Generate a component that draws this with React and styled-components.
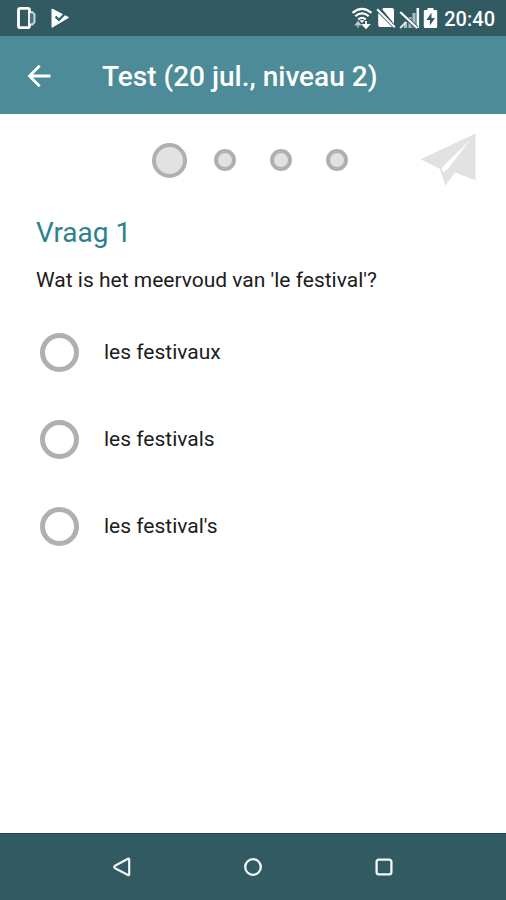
import React, { useState } from "react";
import styled, { createGlobalStyle } from "styled-components";

const GlobalStyle = createGlobalStyle`
  *, *::before, *::after { box-sizing: border-box; }
  body {
    margin: 0;
    background: #fff;
    color: #1c1c1c;
    font-family: Roboto, "Liberation Sans", sans-serif;
  }
  button { font: inherit; color: inherit; }
`;

const Screen = styled.div`
  display: flex;
  flex-direction: column;
  min-height: 100vh;
`;

const StatusBar = styled.div`
  display: flex;
  justify-content: space-between;
  align-items: center;
  height: 36px;
  padding: 0 11px 0 16px;
  background: #315a62;
  color: #fff;
`;

const StatusGroup = styled.div`
  display: flex;
  align-items: center;
  gap: ${(p) => p.$gap}px;
`;

const Clock = styled.time`
  padding: 2px 0 0 3px;
  font-size: 20px;
  line-height: 24px;
  font-weight: 500;
`;

const AppBar = styled.header`
  display: flex;
  align-items: center;
  gap: 46px;
  height: 78px;
  padding: 3px 22px 0;
  background: #4c8b97;
  color: #fff;
`;

const IconButton = styled.button`
  display: flex;
  align-items: center;
  justify-content: center;
  padding: 0;
  border: 0;
  background: none;
  cursor: pointer;
`;

const Title = styled.h1`
  margin: 0;
  font-size: 28px;
  line-height: 36px;
  font-weight: 500;
`;

const Main = styled.main`
  flex: 1;
  display: flex;
  flex-direction: column;
  padding: 16px 30px;
`;

const Progress = styled.nav`
  display: grid;
  grid-template-columns: 1fr auto 1fr;
  align-items: center;
  height: 60px;
`;

const Steps = styled.div`
  display: grid;
  grid-template-columns: repeat(4, 56px);
  grid-column: 2;
  place-items: center;
`;

const Step = styled.button`
  width: ${(p) => (p.$current ? 35 : 22)}px;
  height: ${(p) => (p.$current ? 35 : 22)}px;
  padding: 0;
  border: 4px solid #b0b0b0;
  border-radius: 50%;
  background: #e2e2e2;
  cursor: pointer;
`;

const SendSlot = styled.div`
  justify-self: end;
`;

const Question = styled.section`
  padding: 25px 6px 0;
`;

const QuestionTitle = styled.h2`
  margin: 0;
  color: #2d818e;
  font-size: 28px;
  line-height: 36px;
  font-weight: 400;
`;

const Prompt = styled.p`
  margin: 15px 0 0;
  font-size: 21px;
  line-height: 28px;
`;

const Answers = styled.div`
  display: flex;
  flex-direction: column;
  gap: 47px;
  padding: 38px 4px 0;
`;

const Answer = styled.label`
  display: flex;
  align-items: center;
  gap: 25px;
  min-height: 40px;
  font-size: 21px;
  line-height: 28px;
  cursor: pointer;
`;

const Radio = styled.input`
  appearance: none;
  flex: none;
  width: 39px;
  height: 39px;
  margin: 0;
  border: 5px solid #b0b0b0;
  border-radius: 50%;
  background: #fff;

  &:checked {
    border-color: #4c8b97;
    box-shadow: inset 0 0 0 5px #fff;
    background: #4c8b97;
  }
`;

const SystemNav = styled.nav`
  display: flex;
  justify-content: center;
  align-items: center;
  gap: 107px;
  height: 67px;
  border-top: 1px solid #17484f;
  background: #315a62;
  color: #f2f7f8;
`;

const DeviceIcon = () => (
  <svg width="20" height="24" viewBox="0 0 20 24" fill="none">
    <path d="M12.5 6.2h4l2 2.2v7.8l-2 2.2h-4" fill="#4d737a" stroke="#c8d7d9" strokeWidth="2" />
    <path d="M13.5 7V4q0-1.7-1.7-1.7H4.2Q2.5 2.3 2.5 4v16q0 1.7 1.7 1.7h7.6q1.7 0 1.7-1.7v-2.5" stroke="#fff" strokeWidth="2.8" />
    <path d="M13 6.5v12" stroke="#fff" strokeWidth="1.8" />
  </svg>
);

const PlayCheckIcon = () => (
  <svg width="20" height="20" viewBox="0 0 20 20" fill="none">
    <path d="M2 1 18.5 9.5 2 19.3Z" fill="#fff" stroke="#fff" strokeLinejoin="round" />
    <path d="m5.5 8.5 3.4 3.4L16.5 4" stroke="#315a62" strokeWidth="2.2" />
  </svg>
);

const WifiIcon = () => (
  <svg width="22" height="24" viewBox="0 0 22 24" fill="none">
    <path d="M1.5 6.8Q11-1.2 20.5 6.8M4.3 10.2Q11 4.7 17.7 10.2M7.2 13.5Q11 10.4 14.8 13.5" stroke="#fff" strokeWidth="2.2" />
    <path d="M8.5 14.2h5L11 17Z" fill="#fff" />
    <path d="M7 22v-5M4.5 18.8 7 15.7l2.5 3.1Z" fill="#b8cbce" stroke="#b8cbce" strokeWidth="1.2" />
    <path d="M15 15v5M12.2 18.8 15 22l2.8-3.2Z" fill="#fff" stroke="#fff" strokeWidth="1.8" />
  </svg>
);

const NoSimIcon = () => (
  <svg width="20" height="22" viewBox="0 0 20 22" fill="none">
    <path d="M6.2 2.3 7.5 1H16q2 0 2 2v13.7ZM2.2 6l13.9 14H4.2q-2 0-2-2Z" fill="#fff" />
    <path d="m1.2 2.2 17.6 18" stroke="#fff" strokeWidth="2" />
  </svg>
);

const NoSignalIcon = () => (
  <svg width="21" height="24" viewBox="0 0 21 24" fill="none">
    <path d="M6.5 22v-6M11 22V11M15 22V7" stroke="#a5bcc0" strokeWidth="3.2" />
    <path d="M18.8 22V2" stroke="#f0f5f5" strokeWidth="2.6" />
    <path d="m1 6 17 16" stroke="#315a62" strokeWidth="4" />
    <path d="m1.2 6 17 16" stroke="#fff" strokeWidth="2.2" />
    <path d="m1.2 22 6-6" stroke="#dce7e8" strokeWidth="2" />
  </svg>
);

const BatteryIcon = () => (
  <svg width="15" height="22" viewBox="0 0 15 22">
    <path d="M4.5 1h6v2H13q1.2 0 1.2 1.2v15.6Q14.2 21 13 21H2Q.8 21 .8 19.8V4.2Q.8 3 2 3h2.5Z" fill="#fff" />
    <path d="M8.5 5.8 3.4 13h3.5v5.5l5-7.5H8.5Z" fill="#315a62" />
  </svg>
);

const BackArrowIcon = () => (
  <svg width="34" height="34" viewBox="0 0 34 34" fill="none" stroke="currentColor" strokeWidth="2.8">
    <path d="M28.5 16H8M17.7 5.8 7.5 16l10.2 10.2" />
  </svg>
);

const PaperPlaneIcon = () => (
  <svg width="56" height="54" viewBox="0 0 56 54">
    <path d="M55.5.5v46.8L35 39.6 25.2 52.8 20 36 .5 26.2Z" fill="#e2e2e2" />
    <path d="M50.5 6.5 22 34.4l1 5.4 4.3-3.2Z" fill="#fff" />
  </svg>
);

const NavBackIcon = () => (
  <svg width="24" height="24" viewBox="0 0 24 24" fill="none" stroke="currentColor" strokeWidth="2.2" strokeLinejoin="round">
    <path d="M19.2 4.5v14.8q0 1.3-1.2.7L5 13.2q-1.8-1.2 0-2.4L18 3.8q1.2-.6 1.2.7Z" />
  </svg>
);

const NavHomeIcon = () => (
  <svg width="24" height="24" viewBox="0 0 24 24" fill="none" stroke="currentColor" strokeWidth="2.3">
    <circle cx="12" cy="12" r="7.8" />
  </svg>
);

const NavRecentIcon = () => (
  <svg width="24" height="24" viewBox="0 0 24 24" fill="none" stroke="currentColor" strokeWidth="2.3">
    <rect x="4.6" y="4.6" width="14.8" height="14.8" rx="2.4" />
  </svg>
);

const answers = ["les festivaux", "les festivals", "les festival's"];

export default function App() {
  const [selected, setSelected] = useState(null);

  return (
    <Screen>
      <GlobalStyle />
      <StatusBar>
        <StatusGroup $gap={14}>
          <DeviceIcon />
          <PlayCheckIcon />
        </StatusGroup>
        <StatusGroup $gap={3}>
          <WifiIcon />
          <NoSimIcon />
          <NoSignalIcon />
          <BatteryIcon />
          <Clock>20:40</Clock>
        </StatusGroup>
      </StatusBar>
      <AppBar>
        <IconButton aria-label="Terug">
          <BackArrowIcon />
        </IconButton>
        <Title>Test (20 jul., niveau 2)</Title>
      </AppBar>
      <Main>
        <Progress aria-label="Vragen">
          <Steps>
            {[1, 2, 3, 4].map((n) => (
              <Step key={n} $current={n === 1} aria-label={`Vraag ${n}`} />
            ))}
          </Steps>
          <SendSlot>
            <IconButton aria-label="Verzenden">
              <PaperPlaneIcon />
            </IconButton>
          </SendSlot>
        </Progress>
        <Question>
          <QuestionTitle>Vraag 1</QuestionTitle>
          <Prompt id="prompt">Wat is het meervoud van 'le festival'?</Prompt>
          <Answers role="radiogroup" aria-labelledby="prompt">
            {answers.map((text) => (
              <Answer key={text}>
                <Radio
                  type="radio"
                  name="answer"
                  checked={selected === text}
                  onChange={() => setSelected(text)}
                />
                {text}
              </Answer>
            ))}
          </Answers>
        </Question>
      </Main>
      <SystemNav aria-label="Systeem">
        <IconButton aria-label="Vorige">
          <NavBackIcon />
        </IconButton>
        <IconButton aria-label="Startscherm">
          <NavHomeIcon />
        </IconButton>
        <IconButton aria-label="Recente apps">
          <NavRecentIcon />
        </IconButton>
      </SystemNav>
    </Screen>
  );
}
